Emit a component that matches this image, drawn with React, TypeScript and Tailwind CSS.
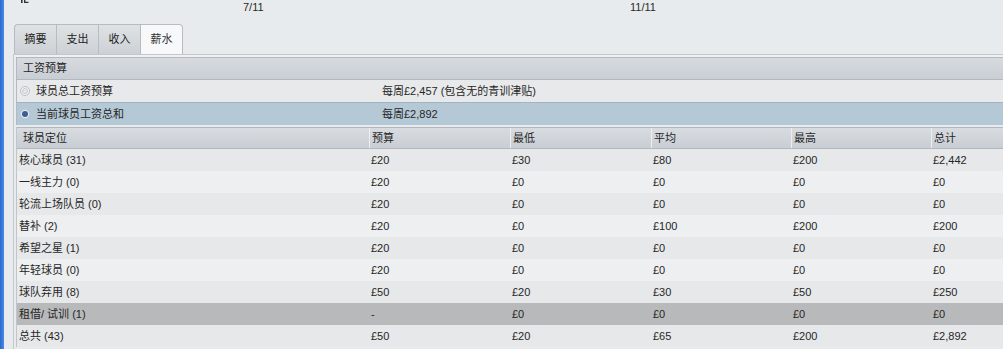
import React from "react";

const rows = [
  { name: "核心球员 (31)", v: ["£20", "£30", "£80", "£200", "£2,442"] },
  { name: "一线主力 (0)", v: ["£20", "£0", "£0", "£0", "£0"] },
  { name: "轮流上场队员 (0)", v: ["£20", "£0", "£0", "£0", "£0"] },
  { name: "替补 (2)", v: ["£20", "£0", "£100", "£200", "£200"] },
  { name: "希望之星 (1)", v: ["£20", "£0", "£0", "£0", "£0"] },
  { name: "年轻球员 (0)", v: ["£20", "£0", "£0", "£0", "£0"] },
  { name: "球队弃用 (8)", v: ["£50", "£20", "£30", "£50", "£250"] },
  { name: "租借/ 试训 (1)", v: ["-", "£0", "£0", "£0", "£0"], loan: true },
  { name: "总共 (43)", v: ["£50", "£20", "£65", "£200", "£2,892"] },
];

const colW = ["w-[352px]", "w-[141px]", "w-[141px]", "w-[140px]", "w-[140px]"];

function Tab({ label, active, first }: { label: string; active?: boolean; first?: boolean }) {
  return (
    <div
      className={
        "h-[30px] flex items-center justify-center border-t border-l border-[#b7bcc2] " +
        (active
          ? "bg-[#f7f8f9] text-[#333] border-r rounded-tr-[4px] w-[43px]"
          : "bg-linear-to-b from-[#dfe2e5] to-[#cdd1d5] text-[#222] w-[42px]") +
        (first ? " rounded-tl-[4px]" : "")
      }
    >
      {label}
    </div>
  );
}

export default function App() {
  return (
    <div className="w-[1003px] h-[349px] overflow-hidden flex bg-[#e8ebee] text-[11px] leading-[13px] text-[#262626] font-['Liberation_Sans','Noto_Sans_CJK_SC',sans-serif]">
      <div className="w-[4px] shrink-0 bg-linear-to-r from-[#2c68cc] to-[#4b8be6]" />
      <div className="flex-1 flex flex-col min-w-0">
        {/* top strip */}
        <div className="h-[24px] flex shrink-0">
          <div className="w-[239px] pl-[16px]">
            <svg width="9" height="4" viewBox="0 0 9 4" className="block">
              <path d="M1 0h1.6v3H1z" fill="#333" />
              <path d="M4 0h1.4v1.7H8.5v1.3H4z" fill="#333" />
            </svg>
          </div>
          <div className="w-[387px] mt-[1px] text-[#2a2a2a]">7/11</div>
          <div className="mt-[1px] text-[#2a2a2a]">11/11</div>
        </div>

        {/* tabs */}
        <div className="flex pl-[10px] shrink-0">
          <Tab label="摘要" first />
          <Tab label="支出" />
          <Tab label="收入" />
          <Tab label="薪水" active />
        </div>

        {/* panel */}
        <div className="flex-1 ml-[9px] border-t border-l border-[#c4c8cd] flex flex-col min-h-0">
          <div className="h-[2px] bg-[#eef0f2] shrink-0" />
          <div className="ml-[2px] flex flex-col">
            {/* budget box */}
            <div className="border-t border-l border-[#b4b9bf] flex flex-col">
              <div className="h-[22px] flex items-center pl-[6px] bg-linear-to-b from-[#d7dbe0] to-[#c9ced4] border-b border-[#b3b8be]">
                工资预算
              </div>
              <div className="h-[22px] flex items-center bg-[#e8e9eb]">
                <div className="w-[365px] flex items-center pl-[3px] gap-[6px]">
                  <span className="w-[10px] h-[10px] rounded-full border border-[#bdbfc2] bg-[#f0f1f2] flex items-center justify-center">
                    <span className="w-[6px] h-[6px] rounded-full border border-[#c8cacd] bg-[#e6e7e8]" />
                  </span>
                  <span>球员总工资预算</span>
                </div>
                <span>每周£2,457 (包含无的青训津贴)</span>
              </div>
              <div className="h-[23px] flex items-center bg-[#b5c8d5] border-t border-[#a3b3c1]">
                <div className="w-[365px] flex items-center pl-[3px] gap-[6px]">
                  <span className="w-[10px] h-[10px] rounded-full border border-[#c0ccd7] bg-[#e6ecf1] flex items-center justify-center">
                    <span className="w-[6px] h-[6px] rounded-full bg-[#3a5e96]" />
                  </span>
                  <span>当前球员工资总和</span>
                </div>
                <span>每周£2,892</span>
              </div>
            </div>

            <div className="h-[2px]" />

            {/* table */}
            <div className="border-l border-[#c0c5cb] flex flex-col">
              <div className="h-[22px] flex bg-linear-to-b from-[#d8dce1] to-[#c9ced4] border-t border-b border-[#b3b8be]">
                <div className={colW[0] + " shrink-0 flex items-center pl-[6px]"}>球员定位</div>
                {["预算", "最低", "平均", "最高"].map((h, i) => (
                  <div key={h} className={colW[i + 1] + " shrink-0 flex items-center pl-[2px] border-l border-[#eceef1]"}>
                    {h}
                  </div>
                ))}
                <div className="flex-1 flex items-center pl-[2px] border-l border-[#eceef1]">总计</div>
              </div>
              {rows.map((r, idx) => (
                <div
                  key={r.name}
                  className={
                    "h-[22px] flex items-center " +
                    (r.loan ? "bg-[#b8b9ba]" : idx % 2 === 0 ? "bg-[#e7e8ea]" : "bg-[#eeeff0]")
                  }
                >
                  <div className={colW[0] + " shrink-0 pl-[2px]"}>{r.name}</div>
                  {r.v.slice(0, 4).map((v, i) => (
                    <div key={i} className={colW[i + 1] + " shrink-0 pl-[2px]"}>
                      {v}
                    </div>
                  ))}
                  <div className="flex-1 pl-[2px]">{r.v[4]}</div>
                </div>
              ))}
            </div>
          </div>
        </div>
      </div>
    </div>
  );
}
